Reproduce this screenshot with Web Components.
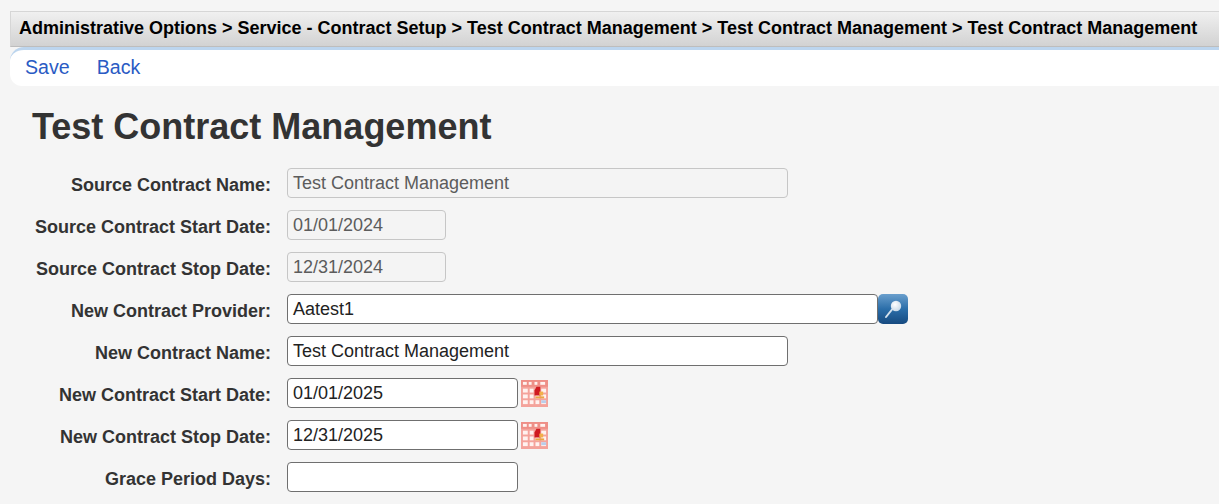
<!DOCTYPE html>
<html lang="en">
<head>
<meta charset="utf-8">
<title>Test Contract Management</title>
<style>
html,body{margin:0;padding:0;height:504px;overflow:hidden;background:#f5f5f5;font-family:"Liberation Sans",Arial,sans-serif;}
</style>
</head>
<body>
<app-page>
  <bread-crumb>Administrative Options &gt; Service - Contract Setup &gt; Test Contract Management &gt; Test Contract Management &gt; Test Contract Management</bread-crumb>
  <action-bar>
    <action-link>Save</action-link>
    <action-link>Back</action-link>
  </action-bar>
  <page-title>Test Contract Management</page-title>
  <form-grid>
    <form-row label="Source Contract Name:"><text-box width="501" disabled>Test Contract Management</text-box></form-row>
    <form-row label="Source Contract Start Date:"><text-box width="159" disabled>01/01/2024</text-box></form-row>
    <form-row label="Source Contract Stop Date:"><text-box width="159" disabled>12/31/2024</text-box></form-row>
    <form-row label="New Contract Provider:"><text-box width="591">Aatest1</text-box><lookup-icon></lookup-icon></form-row>
    <form-row label="New Contract Name:"><text-box width="501">Test Contract Management</text-box></form-row>
    <form-row label="New Contract Start Date:"><text-box width="231">01/01/2025</text-box><calendar-icon></calendar-icon></form-row>
    <form-row label="New Contract Stop Date:"><text-box width="231">12/31/2025</text-box><calendar-icon></calendar-icon></form-row>
    <form-row label="Grace Period Days:"><text-box width="231"></text-box></form-row>
  </form-grid>
</app-page>
<script>
function def(name, html, setup){
  customElements.define(name, class extends HTMLElement{
    constructor(){super();this.attachShadow({mode:'open'}).innerHTML=html;}
    connectedCallback(){if(setup)setup(this,this.shadowRoot);}
  });
}
def('app-page',`<style>:host{display:flex;flex-direction:column;padding:11px 0 0 10px;}</style><slot></slot>`);
def('bread-crumb',`<style>:host{display:block;box-sizing:border-box;height:36px;padding:6px 0 0 8px;border:1px solid #d6d6d6;border-bottom:1px solid #bdbdbd;border-right:0;
  background:linear-gradient(#f0f0f0,#d2d2d2);font:bold 18px/20px "Liberation Sans",Arial,sans-serif;color:#000;white-space:nowrap;overflow:hidden;}</style><slot></slot>`);
def('action-bar',`<style>:host{display:flex;gap:27px;box-sizing:border-box;height:39px;padding:6px 0 0 15px;background:#fff;border-top:3px solid #bcd5ee;border-radius:14px 0 0 12px;}</style><slot></slot>`);
def('action-link',`<style>:host{display:block;font:19.6px/23px "Liberation Sans",Arial,sans-serif;color:#2a5bc4;cursor:pointer;}</style><slot></slot>`);
def('page-title',`<style>:host{display:block;margin:19px 0 0 22px;font:bold 36px/44px "Liberation Sans",Arial,sans-serif;color:#333;}</style><slot></slot>`);
def('form-grid',`<style>:host{display:flex;flex-direction:column;gap:12px;margin-top:19px;}</style><slot></slot>`);
def('form-row',`<style>:host{display:flex;align-items:center;height:30px;}
  .l{box-sizing:border-box;width:261px;text-align:right;font:bold 18px/20px "Liberation Sans",Arial,sans-serif;color:#333;margin-right:16px;white-space:nowrap;padding-top:4px;}</style>
  <div class="l"></div><slot></slot>`,(h,s)=>{s.querySelector('.l').textContent=h.getAttribute('label');});
def('text-box',`<style>:host{display:block;box-sizing:border-box;height:30px;border:1px solid #6f6f6f;border-radius:4px;background:#fff;padding:0 5px;font:18px/28px "Liberation Sans",Arial,sans-serif;color:#222;white-space:nowrap;overflow:hidden;}
  :host([disabled]){background:#f4f4f4;border-color:#c6c6c6;color:#5c5c5c;}</style><slot></slot>`,(h)=>{h.style.width=h.getAttribute('width')+'px';});
def('lookup-icon',`<style>:host{display:block;width:30px;height:30px;}svg{display:block}</style>
<svg width="30" height="30" viewBox="0 0 30 30"><defs><linearGradient id="g" x1="0" y1="0" x2="0" y2="1"><stop offset="0" stop-color="#6a9fcd"/><stop offset=".5" stop-color="#2b6ea9"/><stop offset="1" stop-color="#164a80"/></linearGradient>
<radialGradient id="b" cx=".4" cy=".35" r=".7"><stop offset="0" stop-color="#fff"/><stop offset="1" stop-color="#c6d8e8"/></radialGradient></defs>
<rect width="30" height="30" rx="5" fill="url(#g)"/><path d="M14 15.5L8 23" stroke="#d6e3ee" stroke-width="2" stroke-linecap="round"/><circle cx="18" cy="12" r="5.2" fill="url(#b)"/></svg>`);
def('calendar-icon',`<style>:host{display:block;width:27px;height:27px;margin:1px 0 0 3px;}svg{display:block;filter:blur(.5px)}</style>
<svg width="27" height="27" viewBox="0 0 28 28"><rect x="0" y="0" width="28" height="28" fill="#f4a39b"/><rect x="0" y="0" width="28" height="7" fill="#ee8f87"/>
<g fill="#fff2ef"><rect x="2" y="2" width="4" height="3"/><rect x="8" y="2" width="3" height="3"/><rect x="14" y="2" width="3" height="3"/><rect x="20" y="2" width="5" height="3"/>
<rect x="2" y="9" width="5" height="4"/><rect x="9" y="9" width="4" height="4"/><rect x="15" y="9" width="4" height="4"/><rect x="21" y="9" width="5" height="4"/>
<rect x="2" y="15" width="5" height="4"/><rect x="9" y="15" width="4" height="4"/><rect x="15" y="15" width="4" height="4"/><rect x="21" y="15" width="5" height="4"/>
<rect x="2" y="21" width="5" height="4"/><rect x="9" y="21" width="4" height="4"/><rect x="15" y="21" width="4" height="4"/><rect x="21" y="21" width="5" height="4"/></g>
<path d="M16 7h4v9h-6v-5z" fill="#cf1a20"/><rect x="19" y="12" width="4" height="4" fill="#f2b04a"/><rect x="15" y="17" width="9" height="2" fill="#eba545"/><rect x="21" y="21" width="5" height="3" fill="#b9cdea"/></svg>`);
</script>
</body>
</html>
